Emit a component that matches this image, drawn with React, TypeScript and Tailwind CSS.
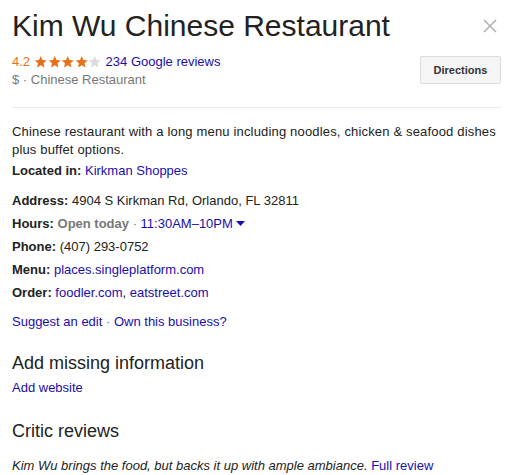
const link = "text-[#1a0dab]";

function Stars({ filled = 4 }: { filled?: number }) {
    return (
        <span className="inline-flex items-center mx-[4px]">
            {[0, 1, 2, 3, 4].map((i) => (
                <svg key={i} width="13.5" height="14" viewBox="0 0 24 24" className="-mt-[1px]">
                    <path
                        d="M12 1.5l3.1 7 7.6.7-5.8 5.1 1.8 7.5L12 17.8l-6.7 4 1.8-7.5-5.8-5.1 7.6-.7z"
                        fill={i < filled ? "#e7711b" : "#dcdcdc"}
                    />
                </svg>
            ))}
        </span>
    );
}

function Row({ label, children }: { label: string; children: React.ReactNode }) {
    return (
        <div className="leading-[18px]">
            <span className="font-bold">{label}</span> {children}
        </div>
    );
}

export default function App() {
    return (
        <div className="w-[515px] h-[475px] bg-white overflow-hidden pl-[12px] pr-[14px] pt-[8px] text-[13px] text-[#222] font-['Liberation_Sans',Arial,sans-serif]">
            <div className="flex justify-between items-start">
                <h1 className="text-[30px] leading-[36px] font-normal">Kim Wu Chinese Restaurant</h1>
                <svg width="14" height="14" viewBox="0 0 14 14" className="mt-[11px] mr-[4px]">
                    <path d="M1 1L13 13M13 1L1 13" stroke="#b0b0b0" strokeWidth="1.5" />
                </svg>
            </div>

            <div className="flex justify-between mt-[9px]">
                <div className="leading-[18px]">
                    <div className="flex items-center">
                        <span className="text-[#e7711b]">4.2</span>
                        <Stars />
                        <a className={link}>234 Google reviews</a>
                    </div>
                    <div className="text-[#777]">$ · Chinese Restaurant</div>
                </div>
                <button className="mt-[3px] h-[28px] w-[81px] bg-[#f5f5f5] border border-[#dcdcdc] rounded-[2px] text-[11px] font-bold text-[#333]">
                    Directions
                </button>
            </div>

            <div className="mt-[18px] border-t border-[#ebebeb]" />

            <p className="mt-[15px] leading-[18px] tracking-[0.17px]">
                Chinese restaurant with a long menu including noodles, chicken &amp; seafood dishes plus buffet options.
            </p>
            <div className="mt-[3px]">
                <Row label="Located in:">
                    <a className={link}>Kirkman Shoppes</a>
                </Row>
            </div>

            <div className="mt-[12px] flex flex-col gap-[5px]">
                <Row label="Address:">4904 S Kirkman Rd, Orlando, FL 32811</Row>
                <Row label="Hours:">
                    <span className="font-bold text-[#777]">Open today</span>
                    <span className="text-[#777]"> · </span>
                    <a className={link}>
                        11:30AM–10PM
                        <svg width="9" height="5" viewBox="0 0 9 5" className="inline-block ml-[3px] mb-[3px]">
                            <path d="M0 0h9L4.5 5z" fill="#1a0dab" />
                        </svg>
                    </a>
                </Row>
                <Row label="Phone:">(407) 293-0752</Row>
                <Row label="Menu:">
                    <a className={link}>places.singleplatform.com</a>
                </Row>
                <Row label="Order:">
                    <a className={link}>foodler.com</a>, <a className={link}>eatstreet.com</a>
                </Row>
            </div>

            <div className="mt-[11px] leading-[18px]">
                <a className={link}>Suggest an edit</a>
                <span className="text-[#777]"> · </span>
                <a className={link}>Own this business?</a>
            </div>

            <h2 className="mt-[20px] text-[18px] leading-[24px]">Add missing information</h2>
            <div className="mt-[4px] leading-[18px]">
                <a className={link}>Add website</a>
            </div>

            <h2 className="mt-[22px] text-[18px] leading-[24px]">Critic reviews</h2>
            <div className="mt-[14px] leading-[18px]">
                <span className="italic">Kim Wu brings the food, but backs it up with ample ambiance.</span>{" "}
                <a className={link}>Full review</a>
            </div>
        </div>
    );
}
